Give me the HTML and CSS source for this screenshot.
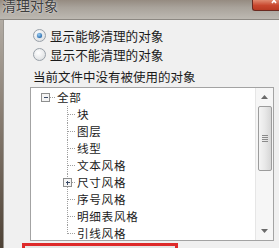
FILE: index.html
```html
<!DOCTYPE html>
<html lang="zh">
<head>
<meta charset="utf-8">
<link rel="stylesheet" href="styles.css">
</head>
<body>
<div class="window">
  <div class="titlebar">
    <span class="title">清理对象</span>
    <span class="close"><svg width="27" height="11" viewBox="0 0 27 11"><path d="M19 -2 L23 3 M23 -2 L19 3" stroke="#fff" stroke-width="1.6"/></svg></span>
  </div>
  <div class="main">
    <div class="frame-left"></div>
    <div class="panel">
      <div class="radio-row"><span class="radio on"><span class="dot"></span></span><span class="lbl">显示能够清理的对象</span></div>
      <div class="radio-row"><span class="radio"></span><span class="lbl">显示不能清理的对象</span></div>
      <div class="caption">当前文件中没有被使用的对象</div>
      <div class="listbox">
        <div class="tree">
          <div class="row root">
            <svg class="gut" width="16" height="17" viewBox="0 0 16 17"><rect x="0.5" y="4.5" width="8" height="8" fill="#f4f4f4" stroke="#8e8f8f"/><path d="M2.5 8.5 H6.5" stroke="#3a4a66"/><path d="M9 8.5 H15" stroke="#a0a0a0" stroke-dasharray="1 1"/></svg>
            <span class="txt">全部</span>
          </div>
          <div class="row child"><svg class="gut" width="15" height="17" viewBox="0 0 15 17"><path d="M5.5 0 V17 M6 8.5 H14" stroke="#a0a0a0" stroke-dasharray="1 1"/></svg><span class="txt">块</span></div>
          <div class="row child"><svg class="gut" width="15" height="17" viewBox="0 0 15 17"><path d="M5.5 0 V17 M6 8.5 H14" stroke="#a0a0a0" stroke-dasharray="1 1"/></svg><span class="txt">图层</span></div>
          <div class="row child"><svg class="gut" width="15" height="17" viewBox="0 0 15 17"><path d="M5.5 0 V17 M6 8.5 H14" stroke="#a0a0a0" stroke-dasharray="1 1"/></svg><span class="txt">线型</span></div>
          <div class="row child"><svg class="gut" width="15" height="17" viewBox="0 0 15 17"><path d="M5.5 0 V17 M6 8.5 H14" stroke="#a0a0a0" stroke-dasharray="1 1"/></svg><span class="txt">文本风格</span></div>
          <div class="row child"><svg class="gut" width="15" height="17" viewBox="0 0 15 17"><path d="M5.5 0 V4 M5.5 13 V17 M10 8.5 H14" stroke="#a0a0a0" stroke-dasharray="1 1"/><rect x="1.5" y="4.5" width="8" height="8" fill="#f4f4f4" stroke="#8e8f8f"/><path d="M3.5 8.5 H7.5 M5.5 6.5 V10.5" stroke="#3a4a66"/></svg><span class="txt">尺寸风格</span></div>
          <div class="row child"><svg class="gut" width="15" height="17" viewBox="0 0 15 17"><path d="M5.5 0 V17 M6 8.5 H14" stroke="#a0a0a0" stroke-dasharray="1 1"/></svg><span class="txt">序号风格</span></div>
          <div class="row child"><svg class="gut" width="15" height="17" viewBox="0 0 15 17"><path d="M5.5 0 V17 M6 8.5 H14" stroke="#a0a0a0" stroke-dasharray="1 1"/></svg><span class="txt">明细表风格</span></div>
          <div class="row child"><svg class="gut" width="15" height="17" viewBox="0 0 15 17"><path d="M5.5 0 V9 M6 8.5 H14" stroke="#a0a0a0" stroke-dasharray="1 1"/></svg><span class="txt">引线风格</span></div>
        </div>
        <div class="scrollbar">
          <div class="arrow"><svg width="7" height="4" viewBox="0 0 7 4"><path d="M0 4 L3.5 0 L7 4 Z" fill="#6a6a6a"/></svg></div>
          <div class="thumb"><svg width="6" height="7" viewBox="0 0 6 7"><path d="M0 0.5 H6 M0 2.5 H6 M0 4.5 H6 M0 6.5 H6" stroke="#8a8a8a"/></svg></div>
          <div class="track"></div>
          <div class="arrow"><svg width="7" height="4" viewBox="0 0 7 4"><path d="M0 0 L3.5 4 L7 0 Z" fill="#6a6a6a"/></svg></div>
        </div>
      </div>
      <div class="redbox"></div>
    </div>
  </div>
</div>
</body>
</html>
```

FILE: styles.css
```css
html, body {
  margin: 0;
  padding: 0;
}
body {
  width: 279px;
  height: 248px;
  overflow: hidden;
  font-family: "Noto Sans CJK SC", "Noto Sans", sans-serif;
  color: #1b1b1b;
}
.window {
  width: 279px;
  height: 248px;
  display: flex;
  flex-direction: column;
  overflow: hidden;
}
.titlebar {
  height: 19px;
  flex: none;
  display: flex;
  justify-content: space-between;
  align-items: flex-start;
  background: linear-gradient(#958b81, #a9a39b 40%, #bdb9b2);
  border-bottom: 1px solid #8c8882;
}
.title {
  font-size: 14px;
  line-height: 14px;
  margin-top: -2px;
  margin-left: 2px;
  color: #3d3d3d;
  text-shadow: 0 0 3px rgba(255,255,255,0.7), 0 0 1px rgba(255,255,255,0.6);
}
.close {
  width: 27px;
  height: 11px;
  background: linear-gradient(#e08a70, #c8472e 55%, #b83a22);
  border: 1px solid #6a2a20;
  border-top: none;
  border-right: none;
  border-bottom-left-radius: 3px;
  box-sizing: border-box;
  display: block;
  line-height: 0;
}
.main {
  flex: 1;
  display: flex;
  min-height: 0;
}
.frame-left {
  width: 3px;
  flex: none;
  background: linear-gradient(#b2aca4, #8a7f74 40%, #4e4236);
}
.panel {
  flex: 1;
  background: #f0f0f0;
  border-left: 1px solid #9a9690;
  padding: 6px 0 0 26px;
  display: flex;
  flex-direction: column;
  align-items: flex-start;
}
.radio-row {
  height: 19px;
  display: flex;
  align-items: center;
}
.radio {
  width: 11px;
  height: 11px;
  border-radius: 50%;
  border: 1px solid #98a0a8;
  background: radial-gradient(circle at 40% 35%, #ffffff, #e2e4e6 70%, #cfd2d6);
  margin-left: 3px;
  margin-right: 3px;
  display: flex;
  align-items: center;
  justify-content: center;
  flex: none;
}
.radio.on .dot {
  width: 5px;
  height: 5px;
  border-radius: 50%;
  background: radial-gradient(circle at 40% 35%, #9fd0f5, #2b6fb0 70%, #1d4f86);
  box-shadow: 0 0 1px #4a88c8;
}
.lbl {
  font-size: 12.6px;
  line-height: 19px;
  padding-left: 1px;
}
.caption {
  font-size: 12.5px;
  line-height: 18px;
  margin-top: 4px;
  margin-left: 3px;
}
.listbox {
  margin-top: 1px;
  width: 244px;
  height: 154px;
  box-sizing: border-box;
  border: 1px solid #a3a3a3;
  background: #fff;
  display: flex;
  flex: none;
}
.tree {
  flex: 1;
  padding-top: 1px;
}
.row {
  height: 17px;
  display: flex;
  align-items: center;
}
.row.root {
  padding-left: 10px;
}
.row.child {
  padding-left: 31px;
}
.gut {
  display: block;
  flex: none;
  shape-rendering: crispEdges;
}
.txt {
  font-size: 11.6px;
  letter-spacing: 0.7px;
  line-height: 17px;
  white-space: nowrap;
}
.scrollbar {
  width: 17px;
  flex: none;
  background: #f6f6f6;
  border-left: 1px solid #e6e6e6;
  display: flex;
  flex-direction: column;
  align-items: center;
}
.arrow {
  height: 18px;
  flex: none;
  display: flex;
  align-items: center;
  justify-content: center;
}
.arrow svg {
  display: block;
}
.thumb {
  width: 14px;
  height: 65px;
  box-sizing: border-box;
  border: 1px solid #9c9c9c;
  border-radius: 2px;
  background: linear-gradient(90deg, #f4f4f4, #e8e8e8 50%, #d6d6d6);
  display: flex;
  align-items: center;
  justify-content: center;
  flex: none;
}
.thumb svg {
  display: block;
  shape-rendering: crispEdges;
}
.track {
  flex: 1;
}
.redbox {
  margin-top: 2px;
  margin-left: -8px;
  width: 156px;
  height: 20px;
  box-sizing: border-box;
  border: 3px solid #de2a2a;
  border-bottom: none;
  background: linear-gradient(#e6e6e6, #dcdcdc);
  flex: none;
}
```
